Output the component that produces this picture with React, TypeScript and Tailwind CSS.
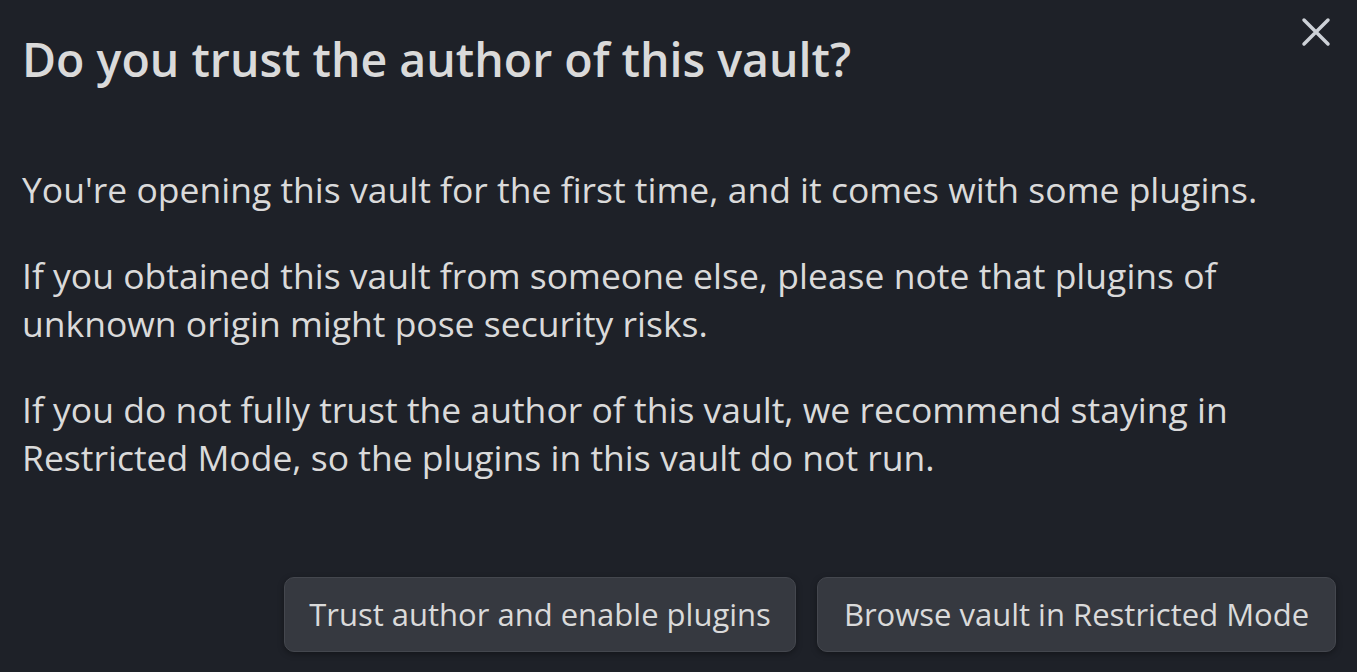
const CloseIcon = () => (
  <svg width="30" height="30" viewBox="0 0 30 30" fill="none" stroke="currentColor" strokeWidth="3.5" strokeLinecap="round">
    <path d="M3 3L27 27M27 3L3 27" />
  </svg>
);

const App = () => {
  return (
    <div
      className="relative w-full h-screen overflow-hidden bg-[#1e2128] text-[#dadada]"
      style={{ fontFamily: '"Open Sans", "Noto Sans", sans-serif' }}
    >
      <button className="absolute left-[1301px] top-[17px] text-[#cdd1d7]">
        <CloseIcon />
      </button>
      <div className="px-[22px] pt-[29px]">
        <h1 className="text-[46.5px] leading-[60px] font-semibold whitespace-nowrap">
          Do you trust the author of this vault?
        </h1>
        <div className="mt-[76px] text-[35.5px] leading-[48px] whitespace-nowrap">
          <p>You're opening this vault for the first time, and it comes with some plugins.</p>
          <p className="mt-[38px]">
            If you obtained this vault from someone else, please note that plugins of
            <br />
            unknown origin might pose security risks.
          </p>
          <p className="mt-[38px]">
            If you do not fully trust the author of this vault, we recommend staying in
            <br />
            Restricted Mode, so the plugins in this vault do not run.
          </p>
        </div>
      </div>
      <div className="mt-[96px] flex justify-end gap-[21px] pr-[21px]">
        <button className="h-[75px] w-[512px] rounded-[10px] border border-[#44474e] bg-[#363940] text-[31px] text-[#dadada] shadow-[0_2px_6px_rgba(0,0,0,0.35)]">
          Trust author and enable plugins
        </button>
        <button className="h-[75px] w-[519px] rounded-[10px] border border-[#44474e] bg-[#363940] text-[31px] text-[#dadada] shadow-[0_2px_6px_rgba(0,0,0,0.35)]">
          Browse vault in Restricted Mode
        </button>
      </div>
    </div>
  );
};

export default App;
